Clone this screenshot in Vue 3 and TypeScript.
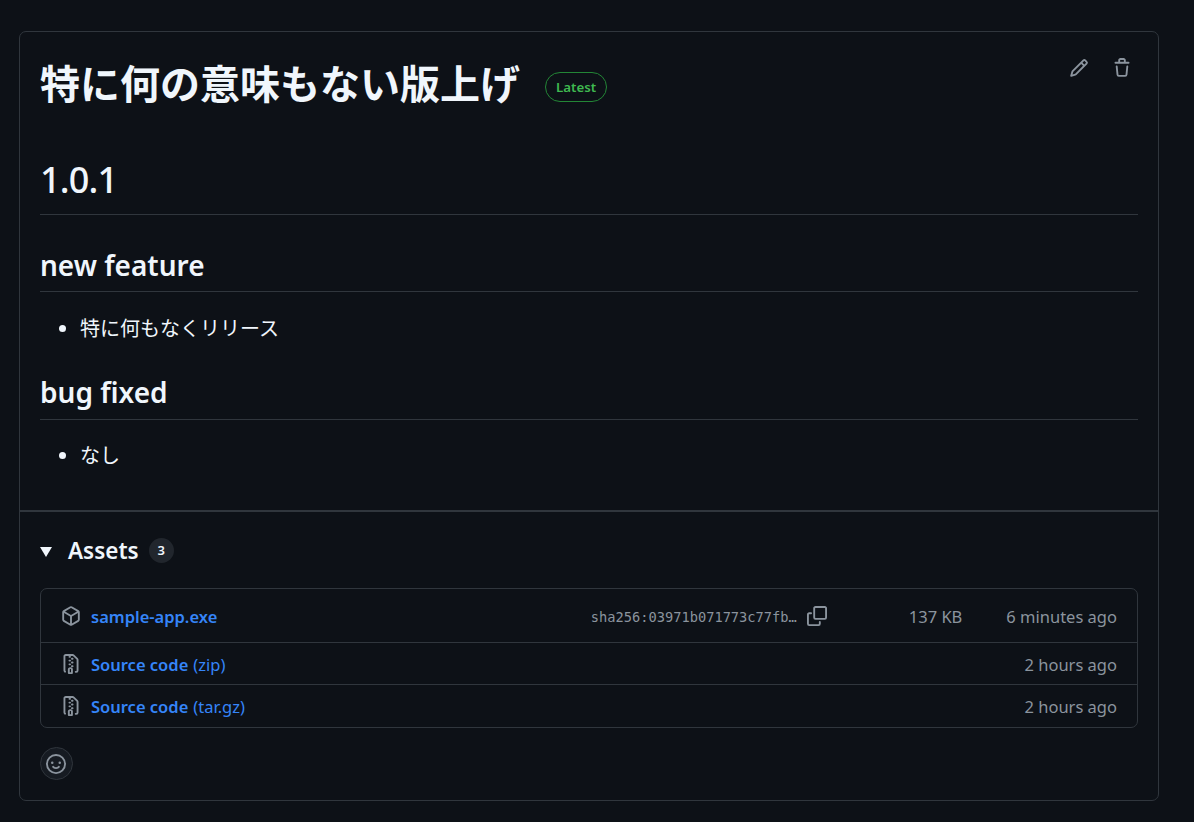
<template>
  <div class="release-card">
    <section class="release-body">
      <div class="title-row">
        <h1 class="release-title">特に何の意味もない版上げ</h1>
        <span class="latest-badge">Latest</span>
        <div class="title-actions">
          <svg class="octicon" viewBox="0 0 16 16" width="20" height="20"><path :d="icons.pencil" /></svg>
          <svg class="octicon" viewBox="0 0 16 16" width="20" height="20"><path :d="icons.trash" /></svg>
        </div>
      </div>
      <div class="markdown">
        <h1>1.0.1</h1>
        <h2>new feature</h2>
        <ul><li>特に何もなくリリース</li></ul>
        <h2 class="second">bug fixed</h2>
        <ul class="last"><li>なし</li></ul>
      </div>
    </section>

    <section class="assets">
      <div class="assets-head">
        <span class="caret"></span>
        <span class="assets-label">Assets</span>
        <span class="counter">3</span>
      </div>
      <ul class="asset-list">
        <li v-for="asset in assets" :key="asset.name + asset.kind" class="asset-row" :class="{ first: asset.sha }">
          <div class="asset-name">
            <svg class="octicon" viewBox="0 0 16 16" width="20" height="20"><path :d="asset.sha ? icons.box : icons.zip" /></svg>
            <a class="asset-link"><b>{{ asset.name }}</b><span v-if="asset.kind" class="asset-kind">{{ asset.kind }}</span></a>
          </div>
          <div v-if="asset.sha" class="asset-sha">
            <code>{{ asset.sha }}</code>
            <svg class="octicon" viewBox="0 0 16 16" width="20" height="20"><path :d="icons.copyA" /><path :d="icons.copyB" /></svg>
          </div>
          <span v-if="asset.size" class="asset-size">{{ asset.size }}</span>
          <span class="asset-time">{{ asset.time }}</span>
        </li>
      </ul>
      <button class="reaction" type="button">
        <svg class="octicon" viewBox="0 0 16 16" width="20" height="20"><path :d="icons.smiley" /></svg>
      </button>
    </section>
  </div>
</template>

<script setup lang="ts">
interface Asset {
  name: string;
  kind?: string;
  sha?: string;
  size?: string;
  time: string;
}

const assets: Asset[] = [
  { name: 'sample-app.exe', sha: 'sha256:03971b071773c77fb…', size: '137 KB', time: '6 minutes ago' },
  { name: 'Source code', kind: '(zip)', time: '2 hours ago' },
  { name: 'Source code', kind: '(tar.gz)', time: '2 hours ago' },
];

const icons = {
  pencil:
    'M11.013 1.427a1.75 1.75 0 0 1 2.474 0l1.086 1.086a1.75 1.75 0 0 1 0 2.474l-8.61 8.61c-.21.21-.47.364-.756.445l-3.251.93a.75.75 0 0 1-.927-.928l.929-3.25c.081-.286.235-.547.445-.758l8.61-8.61Zm.176 4.823L9.75 4.81l-6.286 6.287a.253.253 0 0 0-.064.108l-.558 1.953 1.953-.558a.253.253 0 0 0 .108-.064Zm1.238-3.763a.25.25 0 0 0-.354 0L10.811 3.75l1.439 1.44 1.263-1.263a.25.25 0 0 0 0-.354Z',
  trash:
    'M11 1.75V3h2.25a.75.75 0 0 1 0 1.5H2.75a.75.75 0 0 1 0-1.5H5V1.75C5 .784 5.784 0 6.75 0h2.5C10.216 0 11 .784 11 1.75ZM4.496 6.675l.66 6.6a.25.25 0 0 0 .249.225h5.19a.25.25 0 0 0 .249-.225l.66-6.6a.75.75 0 0 1 1.492.149l-.66 6.6A1.748 1.748 0 0 1 10.595 15h-5.19a1.75 1.75 0 0 1-1.741-1.575l-.66-6.6a.75.75 0 1 1 1.492-.15ZM6.5 1.75V3h3V1.75a.25.25 0 0 0-.25-.25h-2.5a.25.25 0 0 0-.25.25Z',
  box: 'm8.878.392 5.25 3.045c.54.314.872.89.872 1.514v6.098a1.75 1.75 0 0 1-.872 1.514l-5.25 3.045a1.75 1.75 0 0 1-1.756 0l-5.25-3.045A1.75 1.75 0 0 1 1 11.049V4.951c0-.624.332-1.201.872-1.514L7.122.392a1.75 1.75 0 0 1 1.756 0ZM7.875 1.69l-4.63 2.685L8 7.133l4.755-2.758-4.63-2.685a.248.248 0 0 0-.25 0ZM2.5 5.677v5.372c0 .09.047.171.125.216l4.625 2.683V8.432Zm6.25 8.271 4.625-2.683a.25.25 0 0 0 .125-.216V5.677L8.75 8.432Z',
  zip: 'M3.5 1.75v11.5c0 .09.048.173.126.217a.75.75 0 0 1-.752 1.298A1.748 1.748 0 0 1 2 13.25V1.75C2 .784 2.784 0 3.75 0h5.586c.464 0 .909.185 1.237.513l2.914 2.914c.329.328.513.773.513 1.237v8.586A1.75 1.75 0 0 1 12.25 15h-.5a.75.75 0 0 1 0-1.5h.5a.25.25 0 0 0 .25-.25V4.664a.25.25 0 0 0-.073-.177L9.513 1.573a.25.25 0 0 0-.177-.073H7.25a.75.75 0 0 1 0 1.5h-.5a.75.75 0 0 1 0-1.5h-3a.25.25 0 0 0-.25.25Zm3.75 8.75h.5c.966 0 1.75.784 1.75 1.75v3a.75.75 0 0 1-.75.75h-2.5a.75.75 0 0 1-.75-.75v-3c0-.966.784-1.75 1.75-1.75ZM6 5.25a.75.75 0 0 1 .75-.75h.5a.75.75 0 0 1 0 1.5h-.5A.75.75 0 0 1 6 5.25Zm.75 2.25h.5a.75.75 0 0 1 0 1.5h-.5a.75.75 0 0 1 0-1.5ZM8 6.75A.75.75 0 0 1 8.75 6h.5a.75.75 0 0 1 0 1.5h-.5A.75.75 0 0 1 8 6.75ZM8.75 3h.5a.75.75 0 0 1 0 1.5h-.5a.75.75 0 0 1 0-1.5ZM8 9.75A.75.75 0 0 1 8.75 9h.5a.75.75 0 0 1 0 1.5h-.5A.75.75 0 0 1 8 9.75Zm-1 2.5v2.25h1v-2.25a.25.25 0 0 0-.25-.25h-.5a.25.25 0 0 0-.25.25Z',
  copyA:
    'M0 6.75C0 5.784.784 5 1.75 5h1.5a.75.75 0 0 1 0 1.5h-1.5a.25.25 0 0 0-.25.25v7.5c0 .138.112.25.25.25h7.5a.25.25 0 0 0 .25-.25v-1.5a.75.75 0 0 1 1.5 0v1.5A1.75 1.75 0 0 1 9.25 16h-7.5A1.75 1.75 0 0 1 0 14.25Z',
  copyB:
    'M5 1.75C5 .784 5.784 0 6.75 0h7.5C15.216 0 16 .784 16 1.75v7.5A1.75 1.75 0 0 1 14.25 11h-7.5A1.75 1.75 0 0 1 5 9.25Zm1.75-.25a.25.25 0 0 0-.25.25v7.5c0 .138.112.25.25.25h7.5a.25.25 0 0 0 .25-.25v-7.5a.25.25 0 0 0-.25-.25Z',
  smiley:
    'M8 0a8 8 0 1 1 0 16A8 8 0 0 1 8 0ZM1.5 8a6.5 6.5 0 1 0 13 0 6.5 6.5 0 0 0-13 0Zm3.82 1.636a.75.75 0 0 1 1.038.175l.007.009c.103.118.22.222.35.31.264.178.683.37 1.285.37.602 0 1.02-.192 1.285-.371.13-.088.247-.192.35-.31l.007-.008a.75.75 0 0 1 1.222.87l-.022-.015c.02.013.021.015.021.015v.001l-.001.002-.002.003-.005.007-.014.019a2.066 2.066 0 0 1-.184.213c-.16.166-.338.316-.53.445-.63.418-1.37.638-2.127.629-.946 0-1.652-.308-2.126-.63a3.331 3.331 0 0 1-.715-.657l-.014-.02-.005-.006-.002-.003v-.002h-.001l.613-.432-.614.43a.75.75 0 0 1 .183-1.044ZM12 7a1 1 0 1 1-2 0 1 1 0 0 1 2 0ZM5 8a1 1 0 1 1 0-2 1 1 0 0 1 0 2Zm5.25 2.25.592.416a97.71 97.71 0 0 0-.592-.416Z',
};
</script>

<style>
html,
body {
  background: #0d1117;
}
</style>

<style scoped>
.release-card {
  box-sizing: border-box;
  width: 1140px;
  height: 770px;
  margin: 31px 0 0 19px;
  border: 1px solid #30363d;
  border-radius: 7px;
  background: #0d1117;
  color: #f0f6fc;
  font-family: "Noto Sans", "Noto Sans CJK JP", sans-serif;
  overflow: hidden;
}

.octicon {
  display: block;
  flex: none;
  fill: #8b949e;
}

.release-body {
  box-sizing: border-box;
  height: 478px;
  padding: 28px 20px 0;
}

.title-row {
  display: flex;
  align-items: center;
  height: 50px;
}

.release-title {
  margin: -3px 0 0;
  font-size: 40px;
  line-height: 50px;
  font-weight: 700;
}

.latest-badge {
  box-sizing: border-box;
  height: 30px;
  margin: 4px 0 0 25px;
  padding: 0 10px;
  border: 1px solid #238636;
  border-radius: 15px;
  color: #3fb950;
  font-size: 13.3px;
  font-weight: 600;
  line-height: 28px;
}

.title-actions {
  display: flex;
  gap: 23px;
  margin: -34px 6px 0 auto;
}

.markdown h1,
.markdown h2 {
  margin: 0;
  border-bottom: 1px solid #30363d;
  font-weight: 600;
}

.markdown h1 {
  margin-top: 45px;
  padding-bottom: 9px;
  font-size: 36px;
  font-weight: 500;
  letter-spacing: -0.8px;
  line-height: 50px;
}

.markdown h2 {
  margin-top: 31px;
  padding-bottom: 7px;
  font-size: 28px;
  line-height: 38px;
}

.markdown h2.second {
  margin-top: 29px;
  padding-bottom: 8px;
}

.markdown ul {
  margin: 22px 0 0 -1px;
  padding-left: 41px;
  font-size: 20px;
  line-height: 30px;
}

.markdown ul.last {
  margin-top: 21px;
}

.assets {
  border-top: 2px solid #30363d;
  padding: 0 20px;
}

.assets-head {
  display: flex;
  align-items: center;
  height: 40px;
  margin-top: 18px;
}

.caret {
  width: 0;
  height: 0;
  margin: 3px 16px 0 0;
  border-top: 10px solid #f0f6fc;
  border-left: 6px solid transparent;
  border-right: 6px solid transparent;
}

.assets-label {
  font-size: 22.5px;
  font-weight: 600;
}

.counter {
  box-sizing: border-box;
  width: 25px;
  height: 25px;
  margin-left: 10px;
  border-radius: 50%;
  background: #21262d;
  font-size: 13px;
  font-weight: 600;
  line-height: 25px;
  text-align: center;
}

.asset-list {
  margin: 18px 0 0;
  padding: 0;
  list-style: none;
  border: 1px solid #30363d;
  border-radius: 7px;
}

.asset-row {
  display: flex;
  align-items: center;
  height: 41px;
  padding: 0 20px;
  border-top: 1px solid #30363d;
  color: #8b949e;
  font-size: 16.5px;
}

.asset-row:last-child {
  height: 42px;
}

.asset-row.first {
  height: 53px;
  border-top: 0;
}

.asset-name {
  display: flex;
  align-items: center;
  gap: 10px;
}

.asset-link,
.asset-size,
.asset-time,
.asset-sha code {
  padding-top: 2px;
}

.asset-row:last-child .asset-link,
.asset-row:last-child .asset-time {
  padding-top: 0;
}

.asset-link {
  color: #3585f9;
}

.asset-link b {
  font-weight: 600;
}

.asset-kind {
  margin-left: 5px;
}

.asset-sha {
  display: flex;
  align-items: center;
  gap: 10px;
  margin-left: auto;
}

.asset-sha code {
  font-family: "DejaVu Sans Mono", monospace;
  font-size: 13.7px;
}

.asset-size {
  margin-left: 82px;
}

.asset-time {
  margin-left: auto;
}

.asset-row.first .asset-time {
  margin-left: 44px;
}

.reaction {
  display: flex;
  align-items: center;
  justify-content: center;
  width: 33px;
  height: 33px;
  margin-top: 19px;
  padding: 0 1px 0 0;
  border: 1px solid #30363d;
  border-radius: 50%;
  background: #161b22;
}
</style>
